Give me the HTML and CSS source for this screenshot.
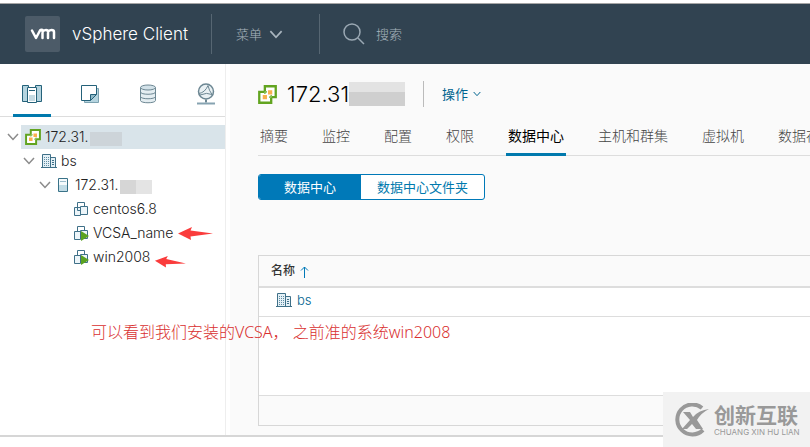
FILE: index.html
```html
<!DOCTYPE html>
<html lang="zh-CN">
<head>
<meta charset="utf-8">
<title>vSphere Client</title>
<link rel="stylesheet" href="styles.css">
</head>
<body>
<svg class="defs" aria-hidden="true">
  <symbol id="vcenter" viewBox="0 0 18 18">
    <path d="M6.500 1.200h10.300v10.300h-4.300v5.300H1.200V6.500h5.300z" fill="#fff" stroke="#62a420" stroke-width="2.200"/>
    <path d="M6.500 6.500h2M6.500 6.500v2M12.500 11.500h-2M12.500 11.500v-2" stroke="#8bc05a" stroke-width="1.500"/>
    <path d="M9.500 5h4v4h-4zM4.500 9.500h4v4h-4z" fill="#f9b04e"/>
  </symbol>
  <symbol id="datacenter" viewBox="0 0 16 16">
    <path d="M1.500 14.500v-13h8v13zM9.500 4.500h5v10h-5" fill="#e4f0f6" stroke="#3f7088"/>
    <path d="M3 4.500h5M3 6.500h5M3 8.500h5M3 10.500h5M3 12.500h5" stroke="#5f8ca2" stroke-dasharray="1 1"/>
    <path d="M11 7.500h2M11 9.500h2M11 11.500h2M0 14.500h16" stroke="#3f7088"/>
  </symbol>
  <symbol id="vm" viewBox="0 0 16 16">
    <path d="M4.500 1.500h7v8h-7z" fill="#fff" stroke="#3f7088"/>
    <path d="M1.500 6.500h6v8h-6zM7.500 5.500h7v8h-7z" fill="#edf5f9" stroke="#3f7088"/>
    <path d="M4.500 6v3.500h3" fill="none" stroke="#3f7088"/>
  </symbol>
  <symbol id="vm-on" viewBox="0 0 16 16">
    <path d="M4.500 1.500h7v5h-7z" fill="#fff" stroke="#3f7088"/>
    <path d="M1.500 6.500h6v8h-6zM7.500 5.500h7v8h-7z" fill="#edf5f9" stroke="#3f7088"/>
    <path d="M8 6v10l8-5z" fill="#5aa220"/>
  </symbol>
  <symbol id="chevron" viewBox="0 0 12 8">
    <path d="M1 1l5 5.500L11 1" fill="none" stroke="currentColor" stroke-width="1.500"/>
  </symbol>
  <symbol id="arrow" viewBox="0 0 36 15">
    <path d="M1 7.500L15 1l-1.500 3.500L36 7.500l-22.500 3L14 14z" fill="#fa3c3c"/>
  </symbol>
</svg>

<header class="topbar">
  <span class="logo" aria-label="vm">
    <svg width="26" height="12" viewBox="0 0 26 12" fill="none" stroke="#fff" stroke-width="2.500" stroke-linecap="round" stroke-linejoin="round"><path d="M2 2.500l4 7.500 4-7.500Q11 1.500 12.500 2v8M12.500 4q1-2 3.500-2 2 0 2 2v6M18 4q1-2 3.500-2Q24 2 24 4v6"/></svg>
  </span>
  <span class="product">vSphere Client</span>
  <button class="menu" type="button">菜单<svg width="14" height="9"><use href="#chevron"/></svg></button>
  <label class="search">
    <svg width="22" height="22" viewBox="0 0 22 22" fill="none" stroke="#9aa8b3" stroke-width="1.500"><circle cx="9" cy="9" r="8"/><path d="M15 15l6 6"/></svg>
    <input type="search" placeholder="搜索" aria-label="搜索">
  </label>
</header>

<div class="workspace">
  <aside class="sidebar">
    <nav class="views">
      <button class="view active" type="button" aria-label="主机和集群"><svg width="22" height="20" viewBox="0 0 22 20" stroke="#25627a"><path d="M1.500 1.500h6v16h-6zM14.500 1.500h6v16h-6z" fill="#b5d4df"/><path d="M6.500 3.500h9v15h-9z" fill="#fff"/><path d="M8 6.500h6"/><path d="M8 11h6v6H8z" fill="#c6dbe3" stroke="none"/></svg></button>
      <button class="view" type="button" aria-label="虚拟机和模板"><svg width="20" height="20" viewBox="0 0 20 20" stroke="#25627a"><path d="M4.500 4.500h14v14h-14z" fill="#b5d4df" stroke="#7ca2b0"/><path d="M1.500 1.500h15v9l-6 6h-9z" fill="#fff"/><path d="M10.500 16.500v-6h6z" fill="#8fb9c8"/></svg></button>
      <button class="view" type="button" aria-label="存储"><svg width="18" height="20" viewBox="0 0 18 20" stroke="#6d8793"><path d="M1.500 3.500v13c0 3 15 3 15 0v-13" fill="#e4edf1"/><ellipse cx="9" cy="3.500" rx="7.500" ry="2.500" fill="#d2e1e8"/><path d="M1.500 8c0 3 15 3 15 0M1.500 12.500c0 3 15 3 15 0" fill="none"/></svg></button>
      <button class="view" type="button" aria-label="网络"><svg width="20" height="22" viewBox="0 0 20 22" fill="none" stroke="#6d8793"><circle cx="10" cy="8.500" r="7.500" fill="#eaf1f4" stroke-width="1.500"/><path d="M3 10.500q6-1 9-8M12 2.500q1 5 4 9M4 12q7-3 12-.5"/><path d="M10 16.500v3" stroke-width="2"/><path d="M1 20.500h18" stroke="#86a3b1" stroke-width="2"/></svg></button>
    </nav>
    <ul class="tree">
      <li class="node selected"><svg class="caret" width="12" height="8"><use href="#chevron"/></svg><div class="item"><svg width="16" height="16"><use href="#vcenter"/></svg><span>172.31.</span><i class="mask"></i></div></li>
      <li class="node level-2"><svg class="caret" width="12" height="8"><use href="#chevron"/></svg><div class="item"><svg width="16" height="16"><use href="#datacenter"/></svg><span>bs</span></div></li>
      <li class="node level-3"><svg class="caret" width="12" height="8"><use href="#chevron"/></svg><div class="item host"><svg width="12" height="16" viewBox="0 0 12 16"><path d="M1.500 1.500h9v13h-9z" fill="#f5fafc" stroke="#397288"/><path d="M3 4.500h6" stroke="#9bbccb"/><path d="M2 8h8v6H2z" fill="#c2dce6"/></svg><span>172.31.</span><i class="mask"></i></div></li>
      <li class="node level-4"><div class="item"><svg width="16" height="16"><use href="#vm"/></svg><span>centos6.8</span></div></li>
      <li class="node level-4"><div class="item"><svg width="16" height="16"><use href="#vm-on"/></svg><span>VCSA_name</span><svg width="36" height="15"><use href="#arrow"/></svg></div></li>
      <li class="node level-4"><div class="item"><svg width="16" height="16"><use href="#vm-on"/></svg><span>win2008</span><svg class="tilted" width="32" height="14"><use href="#arrow"/></svg></div></li>
    </ul>
  </aside>

  <main class="content">
    <div class="title">
      <svg width="19" height="19"><use href="#vcenter"/></svg>
      <h1>172.31</h1><i class="mask large"></i>
      <button class="actions" type="button">操作<svg width="8" height="6"><use href="#chevron"/></svg></button>
    </div>
    <nav class="tabs">
      <a href="#summary">摘要</a><a href="#monitor">监控</a><a href="#configure">配置</a><a href="#permissions">权限</a><a href="#datacenters" class="active">数据中心</a><a href="#hosts">主机和群集</a><a href="#vms">虚拟机</a><a href="#datastores">数据存储</a>
    </nav>
    <div class="switch">
      <button class="on" type="button">数据中心</button><button type="button">数据中心文件夹</button>
    </div>
    <section class="grid">
      <table>
        <thead><tr><th scope="col">名称<svg width="9" height="12" viewBox="0 0 9 12" fill="none" stroke="#0079b8"><path d="M4.500 12V1M1 4.500L4.500 1 8 4.500"/></svg></th></tr></thead>
        <tbody><tr><td><a href="#bs"><svg width="16" height="16"><use href="#datacenter"/></svg>bs</a></td></tr></tbody>
      </table>
      <div class="grid-footer"></div>
    </section>
  </main>
</div>
<footer class="tray"></footer>

<p class="note">可以看到我们安装的VCSA， 之前准的系统win2008</p>
<div class="brand">
  <svg width="36" height="34" viewBox="0 0 36 34"><path d="M28 5A15 15 0 1 0 29 27" fill="none" stroke="#999" stroke-width="4"/><path d="M9 9h7l3 5q6-7 16-8-8 4-12 11l6 9h-7l-4-5-5 5H8l8-9z" fill="#999"/></svg>
  <div class="brand-text"><strong>创新互联</strong><small>CHUANG XIN HU LIAN</small></div>
</div>
</body>
</html>
```

FILE: styles.css
```css
* { box-sizing: border-box; }
body {
  margin: 0;
  padding-top: 4px;
  min-height: 100vh;
  display: flex;
  flex-direction: column;
  overflow: hidden;
  background: #fff;
  color: #222;
  font: 300 13px/24px Inter, "Noto Sans CJK SC", sans-serif;
}
button, input { font: inherit; color: inherit; background: none; border: 0; padding: 0; }
a { color: inherit; text-decoration: none; }
svg { flex: none; }
.defs { position: absolute; width: 0; height: 0; }

.topbar {
  height: 60px;
  display: flex;
  align-items: center;
  padding-left: 25px;
  background: #314351;
  color: #a9b5be;
  box-shadow: 0 -1px #a5a5a5;
}
.logo {
  width: 35px;
  height: 36px;
  display: grid;
  place-items: center;
  border-radius: 2px;
  background: #4c5b68;
}
.product { width: 151px; padding-left: 12px; font-size: 17px; color: #fff; }
.menu, .search { height: 40px; border-left: 1px solid #566672; display: flex; align-items: center; }
.menu { width: 108px; padding-left: 24px; gap: 7px; }
.search { padding-left: 23px; gap: 11px; }
.search input { width: 120px; outline: 0; }
.search input::placeholder { color: #a9b5be; opacity: 1; }

.workspace { flex: 1; display: flex; min-height: 0; }
.sidebar { flex: none; width: 226px; border-right: 1px solid #eee; }
.views { height: 53px; padding-left: 13px; display: flex; gap: 20px; border-bottom: 1px solid #ddd; }
.view { width: 38px; height: 53px; padding-top: 10px; display: grid; place-items: center; border-bottom: 3px solid transparent; }
.view.active { border-color: #0079ad; }
.tree { list-style: none; margin: 0; padding: 8px 0 0 7px; font-size: 14px; }
.node { display: flex; align-items: center; gap: 2px; height: 24px; }
.caret { color: #8b8b8b; }
.level-2 { padding-left: 16px; }
.level-3 { padding-left: 32px; }
.level-4 { padding-left: 62px; }
.item { flex: 1; height: 24px; display: flex; align-items: center; gap: 4px; padding-left: 4px; }
.selected .item { background: #d9e4ea; }
.host { gap: 6px; }
.mask { width: 32px; height: 14px; margin: 4px 0 0 -4px; background: linear-gradient(90deg, #d6d6d6 50%, #e4e4e4 50%); }
.selected .mask { margin-left: -2px; background: #cdd4d9; }
.tilted { transform: rotate(5deg); align-self: flex-end; }

.content { flex: 1; min-width: 0; margin-left: 4px; padding-left: 28px; background: #fafafa; overflow: hidden; }
.title { display: flex; align-items: center; height: 60px; }
.title h1 { margin: 0 0 0 10px; width: 65px; font-size: 22px; font-weight: 300; color: #000; }
.mask.large { width: 56px; height: 24px; margin: 0 18px 0 -3px; background: linear-gradient(#e3e3e3 40%, #cfcfcf 40%); }
.actions { height: 26px; padding-left: 18px; display: flex; align-items: center; gap: 5px; border-left: 1px solid #bbb; color: #00648f; font-weight: 400; }
.tabs { display: flex; gap: 30px; height: 32px; border-bottom: 1px solid #ddd; font-size: 14px; color: #444; white-space: nowrap; }
.tabs a { flex: none; height: 32px; padding: 0 2px; border-bottom: 3px solid transparent; }
.tabs .active { color: #000; border-color: #0079ad; font-weight: 400; }
.switch { display: flex; width: max-content; margin-top: 18px; border: 1px solid #0079b8; border-radius: 3px; overflow: hidden; background: #fff; color: #0079ad; font-weight: 400; }
.switch button { height: 24px; padding: 0 16px; }
.switch .on { padding: 0 25px; background: #0079b8; color: #fff; }
.grid { margin-top: 55px; border: 1px solid #d7d7d7; border-right: 0; background: #fff; }
.grid table { width: 100%; height: 139px; border-collapse: collapse; background: linear-gradient(#ddd, #ddd) 0 60px / 100% 1px no-repeat; }
.grid tr { height: 30px; }
.grid tbody { vertical-align: top; }
.grid th { height: 31px; padding: 0 12px; text-align: left; font-size: 12px; font-weight: 500; color: #333; background: #fafafa; border-bottom: 2px solid #ddd; }
.grid th svg { margin-left: 5px; vertical-align: middle; }
.grid td { padding: 0 17px; }
.grid td a { display: flex; align-items: center; gap: 5px; color: #00648f; }
.grid-footer { height: 30px; border-top: 1px solid #ddd; background: #fafafa; }
.tray { height: 12px; border-top: 2px solid #d6d6d6; background: #fff; }

.note { position: absolute; left: 91px; top: 320px; margin: 0; font: 300 16px/24px "Noto Sans", "Noto Sans CJK SC", sans-serif; color: #d9302f; }
.brand { position: absolute; right: 0; bottom: 0; width: 147px; height: 55px; padding-left: 11px; display: flex; align-items: center; gap: 4px; background: #f2f2f2; color: #999; }
.brand-text { display: grid; }
.brand strong { font-size: 21px; line-height: 24px; font-weight: 700; }
.brand small { font-size: 8px; line-height: 8px; font-weight: 400; white-space: nowrap; }
```
